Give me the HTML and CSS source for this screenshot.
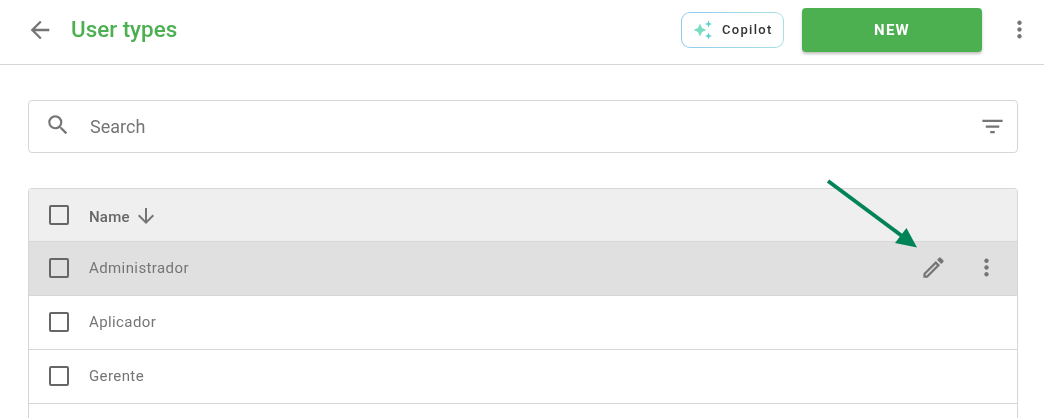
FILE: index.html
```html
<!DOCTYPE html>
<html lang="en">
<head>
<meta charset="utf-8">
<title>User types</title>
<link rel="stylesheet" href="styles.css">
</head>
<body>
<header class="topbar">
  <svg class="icon back" viewBox="0 0 24 24"><path d="M20 11H7.830l5.590-5.590L12 4l-8 8 8 8 1.410-1.410L7.830 13H20v-2z"/></svg>
  <h1 class="title">User types</h1>
  <button class="copilot">
    <span class="copilot-inner">
      <svg class="sparkle" viewBox="0 0 20 20"><path class="s1" d="M7 3.500 9 8 13.500 10 9 12 7 16.500 5 12 .5 10 5 8z"/><path class="s2" d="M15.500 .5 16.500 3 19 4 16.500 5 15.500 7.500 14.500 5 12 4 14.500 3z"/><path class="s3" d="M15.500 12.500 16.500 15 19 16 16.500 17 15.500 19.500 14.500 17 12 16 14.500 15z"/></svg>
      <span class="copilot-label">Copilot</span>
    </span>
  </button>
  <button class="new"><span class="new-label">NEW</span></button>
  <svg class="icon more" viewBox="0 0 24 24"><path d="M12 8c1.100 0 2-.9 2-2s-.9-2-2-2-2 .9-2 2 .9 2 2 2zm0 2c-1.100 0-2 .9-2 2s.9 2 2 2 2-.9 2-2-.9-2-2-2zm0 6c-1.100 0-2 .9-2 2s.9 2 2 2 2-.9 2-2-.9-2-2-2z"/></svg>
</header>
<main class="content">
  <div class="search">
    <svg class="icon search-icon" viewBox="0 0 24 24"><path d="M15.500 14h-.79l-.28-.27A6.471 6.471 0 0 0 16 9.500 6.500 6.500 0 1 0 9.500 16c1.610 0 3.090-.59 4.230-1.570l.27.28v.79l5 4.990L20.490 19l-4.990-5zm-6 0C7.010 14 5 11.990 5 9.500S7.010 5 9.500 5 14 7.010 14 9.500 11.990 14 9.500 14z"/></svg>
    <span class="search-text">Search</span>
    <svg class="icon filter" viewBox="0 0 24 24"><path d="M10 18h4v-2h-4v2zM3 6v2h18V6H3zm3 7h12v-2H6v2z"/></svg>
  </div>
  <section class="table">
    <div class="row head">
      <span class="check"></span>
      <span class="name">Name</span>
      <svg class="icon sort" viewBox="0 0 24 24"><path d="M20 12l-1.410-1.410L13 16.170V4h-2v12.170l-5.580-5.590L4 12l8 8 8-8z"/></svg>
    </div>
    <div class="row active">
      <span class="check"></span>
      <span class="cell">Administrador</span>
      <svg class="icon edit" viewBox="0 0 24 24"><path d="M3 17.250V21h3.750L17.810 9.940l-3.750-3.750L3 17.250zM5.920 19H5v-.92l9.060-9.060.92.92L5.920 19zM20.710 7.040a.996.996 0 0 0 0-1.410l-2.340-2.340a.996.996 0 0 0-1.410 0l-1.830 1.830 3.750 3.750 1.830-1.830z"/></svg>
      <svg class="icon row-more" viewBox="0 0 24 24"><path d="M12 8c1.100 0 2-.9 2-2s-.9-2-2-2-2 .9-2 2 .9 2 2 2zm0 2c-1.100 0-2 .9-2 2s.9 2 2 2 2-.9 2-2-.9-2-2-2zm0 6c-1.100 0-2 .9-2 2s.9 2 2 2 2-.9 2-2-.9-2-2-2z"/></svg>
    </div>
    <div class="row">
      <span class="check"></span>
      <span class="cell">Aplicador</span>
    </div>
    <div class="row">
      <span class="check"></span>
      <span class="cell">Gerente</span>
    </div>
    <div class="row tail"></div>
  </section>
</main>
<svg class="annotation" viewBox="0 0 1044 418" width="1044" height="418"><line x1="828" y1="181" x2="902" y2="236" class="shaft"/><path class="tip" d="M906.500 228 917 247.500 895 243z"/></svg>
</body>
</html>
```

FILE: styles.css
```css
* { box-sizing: border-box; }
html, body { margin: 0; padding: 0; height: 418px; overflow: hidden; background: #fff; }
body { font-family: Roboto, "Liberation Sans", sans-serif; color: #666; position: relative; }
.title, .copilot-label, .new-label, .search-text, .name, .cell { will-change: opacity; }
.icon { display: block; fill: #757575; flex: none; }
.topbar { height: 65px; border-bottom: 1px solid #d6d6d6; display: flex; align-items: center; padding: 0 12px 5px 26px; }
.back { width: 28px; height: 28px; }
.title { margin: -1px 0 0 17px; font-size: 22.400px; font-weight: 500; color: #4caf50; flex: 1; }
.copilot { width: 103px; height: 36px; padding: 1px; margin: 0 18px 0 0; border: 0; border-radius: 9px; background: linear-gradient(90deg, #90caf0, #a8e0e0); font-family: inherit; }
.copilot-inner { display: flex; align-items: center; height: 100%; background: #fff; border-radius: 8px; padding: 0 0 0 11px; gap: 9px; font-size: 13px; font-weight: 500; letter-spacing: 1.300px; color: #333; }
.sparkle { width: 20px; height: 20px; display: block; flex: none; }
.s1 { fill: #7adcc0; }
.s2, .s3 { fill: #62cdcf; }
.new { width: 180px; height: 44px; margin-right: 25.500px; border: 0; border-radius: 4px; background: #4caf50; color: #fff; font-family: inherit; font-size: 15px; font-weight: 700; letter-spacing: 1.250px; box-shadow: 0 2px 3px rgba(0,0,0,.25); }
.more { width: 27px; height: 27px; margin: -1px -1px 0 -1.500px; }
.content { padding: 35px 26px 0 28px; }
.search { height: 53px; border: 1px solid #d6d6d6; border-radius: 4px; display: flex; align-items: center; padding: 0 12px 0 16px; }
.search-icon { width: 26px; height: 26px; margin-top: -3px; }
.search-text { margin-left: 19px; font-size: 18px; color: #757575; flex: 1; }
.filter { width: 27px; height: 27px; margin-right: -.5px; margin-top: -1px; }
.table { margin-top: 35px; border: 1px solid #d6d6d6; border-bottom: 0; border-radius: 4px 4px 0 0; }
.row { height: 54px; display: flex; align-items: center; padding: 0 19px 0 20px; border-bottom: 1px solid #d6d6d6; }
.row.head { height: 53px; background: #efefef; }
.row.active { background: #e0e0e0; }
.row.tail { height: 14px; border-bottom: 0; }
.check { width: 20px; height: 20px; border: 2px solid #666; border-radius: 2px; flex: none; margin-top: -1px; }
.head .check { margin-top: 0; }
.name { margin-left: 20px; font-size: 15px; font-weight: 500; color: #666; letter-spacing: .2px; padding-top: 4px; }
.cell { margin-left: 20px; font-size: 15px; color: #757575; letter-spacing: .4px; flex: 1; margin-top: -2px; }
.sort { width: 24px; height: 24px; margin-left: 4px; margin-top: 1px; }
.edit { width: 27px; height: 27px; margin-right: 27.500px; margin-top: -2px; }
.row-more { width: 27px; height: 27px; margin: -2px -1.500px 0; }
.annotation { position: absolute; left: 0; top: 0; pointer-events: none; }
.shaft { stroke: #008357; stroke-width: 4; }
.tip { fill: #008357; }
```
